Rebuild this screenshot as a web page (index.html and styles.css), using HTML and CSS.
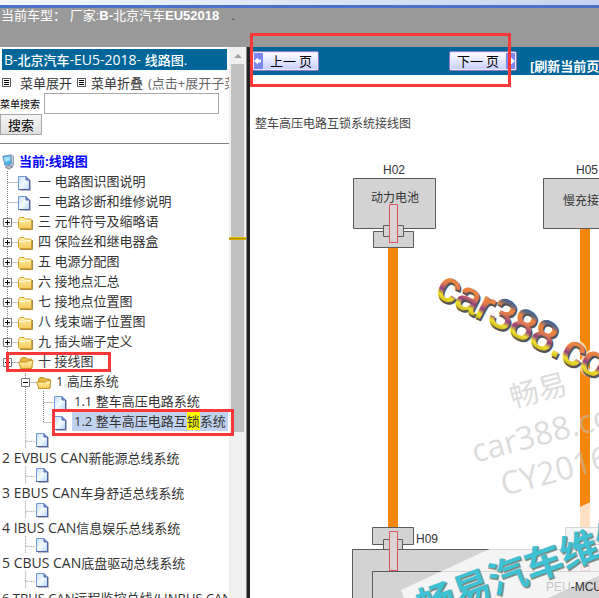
FILE: index.html
```html
<!DOCTYPE html>
<html lang="zh-CN">
<head>
<meta charset="utf-8">
<title>北京汽车EU5 2018 线路图</title>
<link rel="stylesheet" href="styles.css">
</head>
<body>
<svg class="defs" aria-hidden="true">
  <defs>
    <linearGradient id="paper" x1="0" y1="0" x2="1" y2="1"><stop offset="0" stop-color="#c3dcfa"/><stop offset=".5" stop-color="#f4faff"/><stop offset="1" stop-color="#b5d2f5"/></linearGradient>
    <linearGradient id="gold" x1="0" y1="0" x2="0" y2="1"><stop offset="0" stop-color="#fff3ae"/><stop offset="1" stop-color="#f3cb5c"/></linearGradient>
    <symbol id="doc" viewBox="0 0 18 18">
      <path d="M2 16.500h10.500V6" fill="none" stroke="#b9b9c4"/>
      <path d="M.5 2.500h7.500l3.500 3.500v9.500H.5z" fill="url(#paper)" stroke="#6f9bd8"/>
      <path d="M8 2.500V6h3.500v9.500H.5" fill="none" stroke="#4d62a3"/>
      <path d="M8 2.500 11.500 6H8z" fill="#5c7cc0"/>
    </symbol>
    <symbol id="folder" viewBox="0 0 18 18">
      <path d="M2 15.500h12.500V6" fill="none" stroke="#a98b45"/>
      <path d="M.5 5.500 2 3.500h4l1.500 1.500h5l1 1v8.500H1.500l-1-1z" fill="url(#gold)" stroke="#d4a12d"/>
      <path d="M1 7.500h6l1-1h5" stroke="#fffbe0" fill="none"/>
    </symbol>
    <symbol id="folder-open" viewBox="0 0 18 18">
      <path d="M2.500 14.500V5L4 3.500h4L9.500 5h4l.5 1v8z" fill="#e5b844" stroke="#c8962a"/>
      <path d="M3 14.500.5 8h9l1.500-1.500h4l-1.500 8z" fill="url(#gold)" stroke="#c8962a"/>
    </symbol>
    <symbol id="plus" viewBox="0 0 18 20">
      <path d="M7.500 0v20M7.500 11.500H18" stroke="#888" stroke-dasharray="1 1"/>
      <path d="M3.500 7.500h8v8h-8z" fill="#fff" stroke="#777"/>
      <path d="M5 11.500h5M7.500 9v5" stroke="#000"/>
    </symbol>
    <symbol id="minus" viewBox="0 0 18 20">
      <path d="M7.500 0v20M7.500 11.500H18" stroke="#888" stroke-dasharray="1 1"/>
      <path d="M3.500 7.500h8v8h-8z" fill="#fff" stroke="#777"/>
      <path d="M5 11.500h5" stroke="#000"/>
    </symbol>
    <symbol id="tee" viewBox="0 0 18 20"><path d="M7.500 0v20M7.500 11.500H18" stroke="#888" stroke-dasharray="1 1"/></symbol>
    <symbol id="elbow" viewBox="0 0 18 20"><path d="M7.500 0v12M7.500 11.500H18" stroke="#888" stroke-dasharray="1 1"/></symbol>
    <symbol id="line" viewBox="0 0 18 20"><path d="M7.500 0v20" stroke="#888" stroke-dasharray="1 1"/></symbol>
  </defs>
</svg>

<div class="strip"></div>
<header class="top">当前车型： <span>厂家:<b>B-</b>北京汽车<b>EU52018</b></span><span class="dot">.</span></header>

<div class="frames">
  <nav class="side">
    <div class="side-main">
      <h1 class="title"><span class="latin">B-</span>北京汽车<span class="latin">-EU5-2018- </span>线路图.</h1>
      <div class="tools">
        <svg class="list" viewBox="0 0 9 9"><path d="M.5.500h8v8h-8z" fill="#fff" stroke="#555"/><path d="M2 2.500h5M2 4.500h5M2 6.500h5" stroke="#000"/></svg>
        <a href="#">菜单展开</a>
        <svg class="list" viewBox="0 0 9 9"><path d="M.5.500h8v8h-8z" fill="#fff" stroke="#555"/><path d="M2 2.500h5M2 4.500h5M2 6.500h5" stroke="#000"/></svg>
        <a href="#">菜单折叠</a>
        <span class="hint">(点击+展开子菜单)</span>
      </div>
      <form class="search">
        <label for="q">菜单搜索</label><input id="q" type="text">
        <button type="button">搜索</button>
      </form>
      <div class="tree">
        <div class="row root">
          <svg class="pc" viewBox="0 0 18 18"><path d="M2 2.500 11 1l1.500 10L4.500 13z" fill="#46b4ee" stroke="#6a8fb5"/><path d="M3.500 4 10 3l.5 4L4.500 9z" fill="#a5e4ff"/><path d="m11 1 3 1.500v10L12.500 14z" fill="#cfd6df" stroke="#8793a8"/><path d="m5 15 4-2.500 4 2L9 17z" fill="#b9c0ce" stroke="#6e7892"/></svg>
          <a href="#">当前:线路图</a>
        </div>
        <div class="row"><svg class="j"><use href="#tee"/></svg><svg class="i"><use href="#doc"/></svg><a href="#">一 电路图识图说明</a></div>
        <div class="row"><svg class="j"><use href="#tee"/></svg><svg class="i"><use href="#doc"/></svg><a href="#">二 电路诊断和维修说明</a></div>
        <div class="row"><svg class="j"><use href="#plus"/></svg><svg class="i"><use href="#folder"/></svg><a href="#">三 元件符号及缩略语</a></div>
        <div class="row"><svg class="j"><use href="#plus"/></svg><svg class="i"><use href="#folder"/></svg><a href="#">四 保险丝和继电器盒</a></div>
        <div class="row"><svg class="j"><use href="#plus"/></svg><svg class="i"><use href="#folder"/></svg><a href="#">五 电源分配图</a></div>
        <div class="row"><svg class="j"><use href="#plus"/></svg><svg class="i"><use href="#folder"/></svg><a href="#">六 接地点汇总</a></div>
        <div class="row"><svg class="j"><use href="#plus"/></svg><svg class="i"><use href="#folder"/></svg><a href="#">七 接地点位置图</a></div>
        <div class="row"><svg class="j"><use href="#plus"/></svg><svg class="i"><use href="#folder"/></svg><a href="#">八 线束端子位置图</a></div>
        <div class="row"><svg class="j"><use href="#plus"/></svg><svg class="i"><use href="#folder"/></svg><a href="#">九 插头端子定义</a></div>
        <div class="row"><svg class="j"><use href="#minus"/></svg><svg class="i"><use href="#folder-open"/></svg><a href="#">十 接线图</a></div>
        <div class="row sub"><svg class="j"><use href="#minus"/></svg><svg class="i"><use href="#folder-open"/></svg><a href="#">1 高压系统</a></div>
        <div class="row sub"><svg class="j"><use href="#line"/></svg><svg class="j"><use href="#tee"/></svg><svg class="i"><use href="#doc"/></svg><a href="#">1.1 整车高压电路系统</a></div>
        <div class="row sub"><svg class="j"><use href="#line"/></svg><svg class="j"><use href="#elbow"/></svg><svg class="i"><use href="#doc"/></svg><a class="current" href="#">1.2 整车高压电路互<mark>锁</mark>系统</a></div>
        <div class="leaf"><svg class="j"><use href="#tee"/></svg><svg class="i"><use href="#doc"/></svg></div>
        <a class="bus" href="#"><span class="latin">2 EVBUS CAN</span>新能源总线系统</a>
        <div class="leaf"><svg class="j"><use href="#tee"/></svg><svg class="i"><use href="#doc"/></svg></div>
        <a class="bus" href="#"><span class="latin">3 EBUS CAN</span>车身舒适总线系统</a>
        <div class="leaf"><svg class="j"><use href="#tee"/></svg><svg class="i"><use href="#doc"/></svg></div>
        <a class="bus" href="#"><span class="latin">4 IBUS CAN</span>信息娱乐总线系统</a>
        <div class="leaf"><svg class="j"><use href="#tee"/></svg><svg class="i"><use href="#doc"/></svg></div>
        <a class="bus" href="#"><span class="latin">5 CBUS CAN</span>底盘驱动总线系统</a>
        <div class="leaf"><svg class="j"><use href="#tee"/></svg><svg class="i"><use href="#doc"/></svg></div>
        <a class="bus" href="#">6 TBUS CAN远程监控总线/LINBUS CAN</a>
      </div>
    </div>
    <div class="bar"><i class="arrow"></i><i class="thumb"></i><i class="hit"></i></div>
  </nav>
  <div class="split"></div>
  <main class="view">
    <div class="pager">
      <button type="button" class="prev"><svg viewBox="0 0 10 17"><path d="M0 0h10v17H0z" fill="#7d86ee"/><path d="M1 8.500 5 5v2h3v3H5v2z" fill="#fff"/></svg><span>上一 页</span></button>
      <button type="button" class="next"><span>下一 页</span><svg viewBox="0 0 10 17"><path d="M0 0h10v17H0z" fill="#7d86ee"/><path d="M9 8.500 5 5v2H2v3h3v2z" fill="#fff"/></svg></button>
      <a href="#">[刷新当前页]</a>
    </div>
    <svg class="diagram" role="img" aria-label="整车高压电路互锁系统接线图">
      <defs>
        <linearGradient id="chrome" x1="0" y1="-31" x2="0" y2="1" gradientUnits="userSpaceOnUse"><stop offset="0" stop-color="#3d5f8c"/><stop offset=".14" stop-color="#5c6686"/><stop offset=".3" stop-color="#f0853c"/><stop offset=".5" stop-color="#df7750"/><stop offset=".68" stop-color="#8d3f88"/><stop offset=".84" stop-color="#ece32d"/><stop offset="1" stop-color="#d5b51f"/></linearGradient>
      </defs>
      <g transform="translate(-250 -75)">
        <text class="caption" x="255" y="128">整车高压电路互锁系统接线图</text>
        <g class="boxes">
          <path d="M353.500 178.500h82v50h-82zM373.500 231.500h40v16h-40zM543.500 178.500h82v50h-82z"/>
          <path d="M383.500 225.500h20v11h-20z"/>
          <path d="M352.500 549.500h260v60h-260z"/>
          <path d="M372.500 571.500h240v40h-240zM372.500 527.500h41v17h-41zM565.500 527.500h41v17h-41z"/>
          <path d="M383.500 539.500h19v10h-19zM576.500 539.500h19v10h-19z"/>
        </g>
        <path d="M388 248h10v279h-10zM580 229h10v298h-10z" fill="#f7860f"/>
        <path d="M389.500 204.500h8v38h-8zM389.500 531.500h8v39h-8zM581.500 531.500h8v39h-8z" fill="#dcd3d3" stroke="#e2525c"/>
        <path d="M401 590 610 493v78l-62 27h-144z" fill="#fff" fill-opacity=".75"/>
        <g class="labels">
          <text x="383" y="174">H02</text><text x="576" y="174">H05</text><text x="416" y="543">H09</text>
          <text x="371" y="202">动力电池</text><text x="563" y="205">慢充接口</text><text x="546" y="591"><tspan fill="#c4c4c4">PEU</tspan>-MCU</text>
        </g>
        <g class="water">
          <text transform="translate(513 408) rotate(-15)" font-size="29">畅易</text>
          <text transform="translate(475 463) rotate(-15)" font-size="32">car388.com</text>
          <text transform="translate(504 496) rotate(-15)" font-size="32">CY2016</text>
        </g>
        <g class="brand">
          <text class="halo" transform="translate(434 295) rotate(27)">car388.com</text>
          <text class="shade" transform="translate(435 297) rotate(27)">car388.com</text>
          <text class="fill" transform="translate(434 295) rotate(27)">car388.com</text>
        </g>
        <g class="slogan">
          <text class="edge" transform="translate(424 622) rotate(-20)">畅易汽车维修</text>
          <text transform="translate(423 621) rotate(-20)">畅易汽车维修</text>
        </g>
      </g>
    </svg>
  </main>
</div>
<div class="frame-mark mark-pager"></div>
<div class="frame-mark mark-group"></div>
<div class="frame-mark mark-item"></div>
</body>
</html>
```

FILE: styles.css
```css
* { box-sizing: border-box; }
body {
  margin: 0;
  height: 100vh;
  display: flex;
  flex-direction: column;
  overflow: hidden;
  position: relative;
  background: #fff;
  color: #333;
  font: 13px/20px "Open Sans", "Noto Sans CJK SC", sans-serif;
}
a { color: inherit; text-decoration: none; }
svg { display: block; flex: none; }
.defs { position: absolute; width: 0; height: 0; }
.latin { font-size: 14px; }

.strip {
  flex: none;
  height: 8px;
  background: linear-gradient(90deg, #f4f8fe, #c6d4f2);
  border-bottom: 3px solid #4a72c8;
}
.top {
  flex: none;
  height: 39px;
  padding: 0 1px;
  line-height: 16px;
  background: #999;
  color: #fff;
  font-family: "Liberation Sans", "Noto Sans CJK SC", sans-serif;
  white-space: pre;
}
.dot { margin-left: 12px; color: #333; }

.frames { flex: 1; min-height: 0; display: flex; }
.side { flex: none; width: 246px; display: flex; }
.side-main { flex: 1; min-width: 0; overflow: hidden; }
.title {
  margin: 2px 2px 0;
  height: 21px;
  padding-left: 2px;
  background: #069;
  color: #fff;
  font-size: 13px;
  line-height: 21px;
  font-weight: 500;
  white-space: nowrap;
}
.tools {
  display: flex;
  align-items: center;
  height: 23px;
  padding: 2px 0 0 2px;
  gap: 5px;
  white-space: nowrap;
}
.tools a:first-of-type { margin-left: 4px; }
.list { width: 9px; height: 9px; }
.hint { color: #666; }
.search {
  display: flex;
  flex-wrap: wrap;
  align-items: center;
  border-bottom: 1px solid #808080;
  padding-bottom: 8px;
}
.search label { width: 44px; color: #000; font-size: 10px; }
.search input { width: 175px; height: 21px; border: 1px solid #a9a9a9; padding: 1px; }
.search button {
  width: 42px;
  height: 21px;
  padding: 0;
  border: 1px solid #a6a6a6;
  background: linear-gradient(#f6f6f6, #dedede);
  color: #000;
  font: 13px/17px "Noto Sans CJK SC", sans-serif;
}

.tree { padding-top: 7px; white-space: nowrap; }
.row { display: flex; height: 20px; }
.row a { padding: 0 2px; }
.j { width: 18px; height: 20px; }
.i { width: 18px; height: 18px; margin-top: 3px; }
.sub { padding-left: 18px; }
.root { padding-left: 1px; color: #00f; font-weight: 700; }
.pc { width: 16px; height: 18px; margin-top: 2px; }
.current { background: #c1d2ee; }
mark { background: #ff0; color: inherit; }
.leaf { display: flex; height: 18px; padding-left: 18px; }
.leaf .j { height: 18px; }
.leaf .i { margin-top: 0; }
.bus { display: block; height: 17px; line-height: 18px; padding-left: 2px; }

.bar { width: 17px; background: #f0f0f0; display: grid; grid-template-rows: 17px 1fr; justify-items: center; position: relative; }
.arrow { width: 0; height: 0; margin-top: 7px; border: 4px solid transparent; border-top: 0; border-bottom-color: #a0a0a0; }
.thumb { width: 13px; height: 69%; background: #c1c1c1; }
.hit { position: absolute; top: 190px; left: 0; right: 0; height: 3px; background: #b08c00; border-top: 1px solid #e6bf10; border-bottom: 1px solid #d5ae00; }
.split { flex: none; width: 4px; background: #222; border-left: 1px solid #888; }

.view { flex: 1; min-width: 0; display: flex; flex-direction: column; overflow: hidden; }
.pager {
  flex: none;
  height: 28px;
  display: flex;
  align-items: flex-start;
  background: #069;
  color: #fff;
  white-space: nowrap;
  padding: 4px 0 0 2px;
}
.pager button {
  display: flex;
  align-items: center;
  justify-content: space-between;
  height: 20px;
  padding: 0;
  border: 1px solid #8c7cc8;
  border-radius: 2px;
  outline: 1px solid #e9e9ff;
  outline-offset: -2px;
  background: linear-gradient(#fff, #c7cdfb);
  color: #000;
  font: 13px/18px "Noto Sans CJK SC", sans-serif;
}
.pager button svg { width: 10px; height: 18px; }
.pager span { padding: 0 7px; }
.pager .prev { width: 67px; }
.pager .next { width: 68px; margin-left: 130px; }
.pager a { margin: 6px 0 0 13px; font-weight: 700; font-size: 13px; line-height: 18px; }
.diagram { width: 100%; flex: 1; min-height: 0; overflow: hidden; }
.caption { font-size: 12px; fill: #444; }
.boxes { fill: #d3d3d3; stroke: #5c5c5c; }
.labels { font: 12px "Liberation Sans", "Noto Sans CJK SC", sans-serif; fill: #333; }
.water { fill: #bebebe; fill-opacity: .55; }
.brand { font: 42px "Liberation Sans", sans-serif; }
.brand .fill { fill: url(#chrome); stroke: url(#chrome); stroke-width: 1px; }
.halo { fill: none; stroke: #fff; stroke-width: 5px; stroke-opacity: .7; }
.shade { fill: #555; stroke: #555; stroke-width: 2px; }
.slogan { font: 700 38px "Noto Sans CJK SC", sans-serif; fill: #3fc1d5; }
.edge { fill: #777; stroke: #999988; stroke-width: 1px; }

.frame-mark { position: absolute; border: 3px solid #fb3838; pointer-events: none; }
.mark-pager { left: 250px; top: 33px; width: 261px; height: 54px; }
.mark-group { left: 6px; top: 352px; width: 105px; height: 20px; }
.mark-item { left: 52px; top: 409px; width: 182px; height: 27px; }
```
